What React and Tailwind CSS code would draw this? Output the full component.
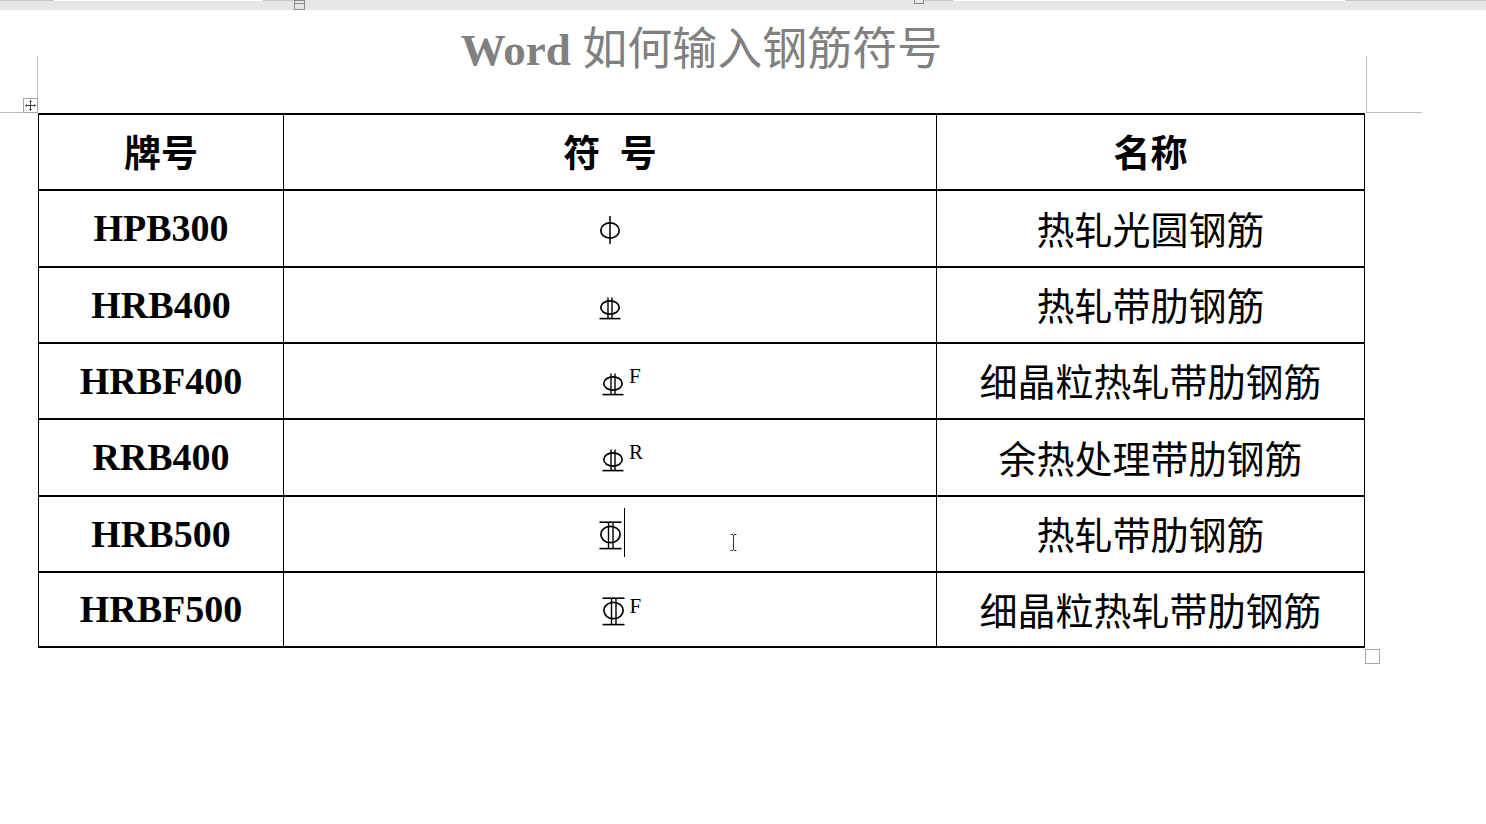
import React from 'react';

const rows = [
  { grade: 'HPB300', sym: 'a', name: '热轧光圆钢筋', h: 'h-[77px]' },
  { grade: 'HRB400', sym: 'b', name: '热轧带肋钢筋', h: 'h-[76px]' },
  { grade: 'HRBF400', sym: 'b', sup: 'F', name: '细晶粒热轧带肋钢筋', h: 'h-[76px]' },
  { grade: 'RRB400', sym: 'b', sup: 'R', name: '余热处理带肋钢筋', h: 'h-[77px]' },
  { grade: 'HRB500', sym: 'c', caret: true, name: '热轧带肋钢筋', h: 'h-[76px]' },
  { grade: 'HRBF500', sym: 'c', sup: 'F', name: '细晶粒热轧带肋钢筋', h: 'h-[75px]' },
];

// 一级钢 Φ
function SymA() {
  return (
    <svg width="22" height="30" viewBox="0 0 22 30" className="mt-[2px]">
      <ellipse cx="11" cy="15.5" rx="9.2" ry="7.6" fill="none" stroke="#000" strokeWidth="1.7" />
      <line x1="11" y1="1" x2="11" y2="29" stroke="#000" strokeWidth="1.5" />
    </svg>
  );
}

// 二级钢
function SymB() {
  return (
    <svg width="22" height="23" viewBox="0 0 22 23" className="mt-[6px]">
      <ellipse cx="11" cy="10.5" rx="9.2" ry="6.7" fill="none" stroke="#000" strokeWidth="1.7" />
      <line x1="9" y1="0.5" x2="9" y2="21.5" stroke="#000" strokeWidth="1.4" />
      <line x1="13" y1="0.5" x2="13" y2="21.5" stroke="#000" strokeWidth="1.4" />
      <line x1="0.5" y1="21.6" x2="21.5" y2="21.6" stroke="#000" strokeWidth="1.6" />
    </svg>
  );
}

// 三级钢
function SymC() {
  return (
    <svg width="23" height="29" viewBox="0 0 23 29" className="mt-[3px]">
      <line x1="0.5" y1="1.2" x2="22.5" y2="1.2" stroke="#000" strokeWidth="1.6" />
      <ellipse cx="11.5" cy="13.5" rx="9.6" ry="8.2" fill="none" stroke="#000" strokeWidth="1.7" />
      <line x1="9.5" y1="1" x2="9.5" y2="27.5" stroke="#000" strokeWidth="1.4" />
      <line x1="14" y1="1" x2="14" y2="27.5" stroke="#000" strokeWidth="1.4" />
      <line x1="0.5" y1="27.6" x2="22.5" y2="27.6" stroke="#000" strokeWidth="1.6" />
    </svg>
  );
}

function Symbol({ row }) {
  return (
    <div className={`relative flex items-center ${row.sup ? 'ml-[6px]' : ''}`}>
      {row.sym === 'a' && <SymA />}
      {row.sym === 'b' && <SymB />}
      {row.sym === 'c' && <SymC />}
      {row.caret && <div className="absolute left-[25px] top-[-10px] w-px h-[49px] bg-black" />}
      {row.sup && (
        <span className={`absolute left-full ml-[5px] text-[21px] leading-[21px] font-['Liberation_Serif',serif] text-black ${row.sym === 'c' ? 'top-[2px]' : 'top-[-1px]'}`}>
          {row.sup}
        </span>
      )}
    </div>
  );
}

function MoveHandle() {
  return (
    <div className="absolute left-[23px] top-[98px] w-[15px] h-[15px] border border-[#a6a6a6] bg-white flex items-center justify-center">
      <svg width="11" height="11" viewBox="0 0 11 11">
        <path d="M5.5 1v9M1 5.5h9" stroke="#404040" strokeWidth="1" />
        <path d="M5.5 0L4 2h3zM5.5 11L4 9h3zM0 5.5L2 4v3zM11 5.5L9 4v3z" fill="#404040" />
      </svg>
    </div>
  );
}

export default function App() {
  return (
    <div className="relative w-[1486px] h-[824px] bg-white overflow-hidden">
      {/* ruler */}
      <div className="relative h-[10px] bg-[#e6e6e6]">
        <div className="flex h-px">
          <div className="w-[54px] bg-[#c8c8c8]" />
          <div className="w-[209px] bg-white" />
          <div className="w-[31px] bg-[#c8c8c8]" />
          <div className="w-[620px]" />
          <div className="w-[39px] bg-[#c8c8c8]" />
          <div className="w-[392px] bg-white" />
          <div className="flex-1 bg-[#c8c8c8]" />
        </div>
        <div className="absolute left-[294px] top-0 w-[11px] h-[10px] border border-[#8a8a8a] bg-[#e6e6e6]">
          <div className="mt-[2px] h-px bg-[#8a8a8a]" />
        </div>
        <div className="absolute left-[914px] top-[-1px] w-[10px] h-[5px] border border-[#8a8a8a] bg-[#e6e6e6]" />
      </div>

      {/* margin corners */}
      <div className="absolute left-[37px] top-[56px] w-px h-[57px] bg-[#bdbdbd]" />
      <div className="absolute left-0 top-[112px] w-[38px] h-px bg-[#bdbdbd]" />
      <div className="absolute left-[1366px] top-[56px] w-px h-[57px] bg-[#bdbdbd]" />
      <div className="absolute left-[1366px] top-[112px] w-[56px] h-px bg-[#bdbdbd]" />
      <MoveHandle />

      <div className="ml-[38px] w-[1327px]">
        <h1 className="h-[103px] pt-[13px] text-center text-[45px] leading-[45px] text-[#808080] font-['Liberation_Serif','Noto_Sans_CJK_SC',serif]">
          <span className="font-bold">Word</span>{' '}
          <span className="font-normal font-['Noto_Sans_CJK_SC',sans-serif]">如何输入钢筋符号</span>
        </h1>

        <div className="relative border-t-2 border-l border-r border-black">
          <div className="flex h-[76px] border-b-2 border-black font-bold text-[37px] font-['Noto_Sans_CJK_SC',sans-serif]">
            <div className="w-[245px] border-r border-black flex items-center justify-center">牌号</div>
            <div className="w-[653px] border-r border-black flex items-center justify-center [word-spacing:11px]">符 号</div>
            <div className="flex-1 flex items-center justify-center">名称</div>
          </div>
          {rows.map((row) => (
            <div key={row.grade + row.name + (row.sup || '')} className={`flex ${row.h} border-b-2 border-black`}>
              <div className="w-[245px] border-r border-black flex items-center justify-center font-bold text-[38px] font-['Liberation_Serif',serif]">
                {row.grade}
              </div>
              <div className="w-[653px] border-r border-black flex items-center justify-center">
                <Symbol row={row} />
              </div>
              <div className="flex-1 flex items-center justify-center text-[38px] font-['Noto_Sans_CJK_SC',sans-serif]">
                <span className="mb-[3px]">{row.name}</span>
              </div>
            </div>
          ))}

          {/* mouse I-beam */}
          <svg width="7" height="17" viewBox="0 0 7 17" className="absolute left-[691px] top-[419px]">
            <path d="M0.5 0.5h2.5M4 0.5h2.5M3.5 1v15M0.5 16.5h2.5M4 16.5h2.5" stroke="#333" strokeWidth="1" fill="none" />
          </svg>
        </div>
      </div>

      {/* resize handle */}
      <div className="absolute left-[1365px] top-[649px] w-[15px] h-[15px] border border-[#a6a6a6] bg-white" />
    </div>
  );
}
